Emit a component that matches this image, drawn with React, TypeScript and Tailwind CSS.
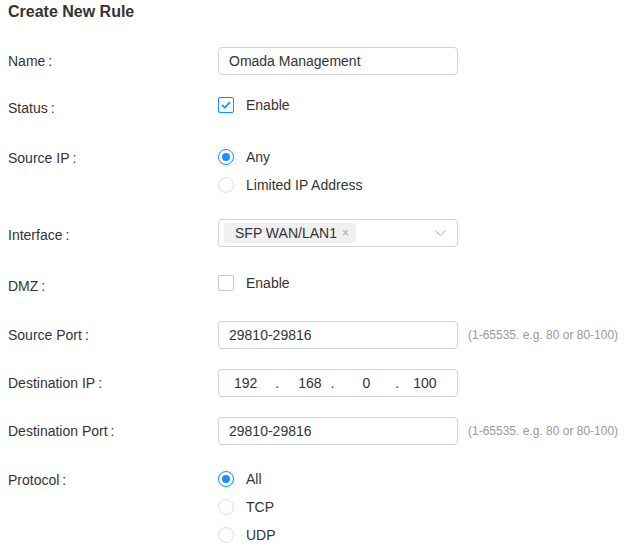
import React from "react";

function Label({ text, pt = 0 }: { text: string; pt?: number }) {
  return (
    <div
      className="w-[210px] shrink-0 h-[28px] leading-[28px] text-[14px] text-[#333]"
      style={pt ? { paddingTop: pt } : undefined}
    >
      {text}
      <span className="ml-[3px]">:</span>
    </div>
  );
}

function TextInput({ value }: { value: string }) {
  return (
    <div className="w-[240px] h-[28px] border border-[#d4d4d4] rounded-[4px] flex items-center pl-[10px] text-[14px] text-[#333]">
      {value}
    </div>
  );
}

function Checkbox({ checked, label }: { checked: boolean; label: string }) {
  return (
    <div className="h-[28px] flex items-center">
      <div
        className={
          checked
            ? "w-[16px] h-[16px] border border-[#1890ff] rounded-[2px] bg-white flex items-center justify-center"
            : "w-[16px] h-[16px] border border-[#c8c8c8] rounded-[2px] bg-white"
        }
      >
        {checked && (
          <svg width="10" height="8" viewBox="0 0 10 8">
            <path d="M1 4 L3.8 6.6 L9 1.2" fill="none" stroke="#1890ff" strokeWidth="1.8" />
          </svg>
        )}
      </div>
      <span className="ml-[12px] text-[14px] text-[#333]">{label}</span>
    </div>
  );
}

function Radio({ checked, label }: { checked: boolean; label: string }) {
  return (
    <div className="h-[28px] flex items-center">
      <div
        className={
          checked
            ? "w-[16px] h-[16px] rounded-full border border-[#1890ff] bg-white flex items-center justify-center shadow-[0_0_0_2px_rgba(24,144,255,0.08)]"
            : "w-[16px] h-[16px] rounded-full border border-[#dedede] bg-white"
        }
      >
        {checked && <div className="w-[8px] h-[8px] rounded-full bg-[#1890ff]" />}
      </div>
      <span className="ml-[12px] text-[14px] text-[#333]">{label}</span>
    </div>
  );
}

function Hint() {
  return (
    <span className="ml-[10px] text-[12px] text-[#999]">(1-65535. e.g. 80 or 80-100)</span>
  );
}

export default function App() {
  return (
    <div className="w-[628px] h-[553px] bg-white pl-2 font-['Liberation_Sans',Arial,sans-serif]">
      <div className="h-[24px] leading-[24px] text-[16px] font-bold text-[#333]">Create New Rule</div>

      <div className="flex mt-[23px]">
        <Label text="Name" />
        <TextInput value="Omada Management" />
      </div>

      <div className="flex mt-[16px]">
        <Label text="Status" pt={3} />
        <Checkbox checked label="Enable" />
      </div>

      <div className="flex mt-[24px]">
        <Label text="Source IP" pt={1} />
        <div className="flex flex-col">
          <Radio checked label="Any" />
          <Radio checked={false} label="Limited IP Address" />
        </div>
      </div>

      <div className="flex mt-[20px]">
        <Label text="Interface" pt={2} />
        <div className="w-[240px] h-[28px] border border-[#d4d4d4] rounded-[4px] flex items-center pl-[5px] pr-[11px]">
          <div className="h-[20px] flex items-center bg-[#f0f0f0] rounded-[3px] pl-[11px] pr-[7px] text-[14px] text-[#333]">
            SFP WAN/LAN1
            <span className="ml-[5px] text-[12px] text-[#aaa] leading-none">×</span>
          </div>
          <div className="flex-1" />
          <svg width="11" height="6" viewBox="0 0 11 6">
            <path d="M0.5 0.5 L5.5 5.5 L10.5 0.5" fill="none" stroke="#b5b5b5" strokeWidth="1" />
          </svg>
        </div>
      </div>

      <div className="flex mt-[22px]">
        <Label text="DMZ" pt={3} />
        <Checkbox checked={false} label="Enable" />
      </div>

      <div className="flex items-center mt-[24px]">
        <Label text="Source Port" />
        <TextInput value="29810-29816" />
        <Hint />
      </div>

      <div className="flex mt-[20px]">
        <Label text="Destination IP" />
        <div className="w-[240px] h-[28px] border border-[#d4d4d4] rounded-[4px] flex items-center text-[14px] text-[#333]">
          <span className="ml-[15px]">192</span>
          <span className="ml-[18px]">.</span>
          <span className="ml-[19px]">168</span>
          <span className="ml-[9px]">.</span>
          <span className="ml-[28px]">0</span>
          <span className="ml-[25px]">.</span>
          <span className="ml-[14px]">100</span>
        </div>
      </div>

      <div className="flex items-center mt-[20px]">
        <Label text="Destination Port" />
        <TextInput value="29810-29816" />
        <Hint />
      </div>

      <div className="flex mt-[20px]">
        <Label text="Protocol" pt={1} />
        <div className="flex flex-col">
          <Radio checked label="All" />
          <Radio checked={false} label="TCP" />
          <Radio checked={false} label="UDP" />
        </div>
      </div>
    </div>
  );
}
